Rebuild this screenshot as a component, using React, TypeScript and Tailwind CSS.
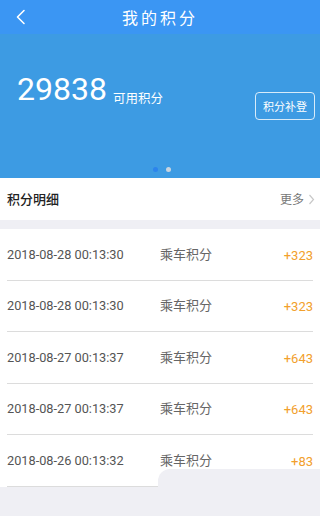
import * as React from "react";

const records = [
    {time: "2018-08-28 00:13:30", type: "乘车积分", amount: "+323"},
    {time: "2018-08-28 00:13:30", type: "乘车积分", amount: "+323"},
    {time: "2018-08-27 00:13:37", type: "乘车积分", amount: "+643"},
    {time: "2018-08-27 00:13:37", type: "乘车积分", amount: "+643"},
    {time: "2018-08-26 00:13:32", type: "乘车积分", amount: "+83"},
];

export default function App() {
    return (
        <div
            className="relative w-[320px] h-[516px] overflow-hidden bg-white font-['Roboto','Noto_Sans_CJK_SC',sans-serif]">
            {/* top bar */}
            <div className="h-[34px] bg-[#3b96f3] grid grid-cols-[1fr_auto_1fr] items-center">
                <div className="pl-[15px] flex items-center">
                    <svg width="11" height="16" viewBox="0 0 11 16" fill="none">
                        <polyline points="9,1.5 2.5,8 9,14.5" stroke="white" strokeWidth="1.6"
                                  strokeLinecap="round" strokeLinejoin="round"/>
                    </svg>
                </div>
                <h1 className="text-white text-[16px] font-normal tracking-[3px] font-['Noto_Sans_CJK_SC',sans-serif]">我的积分</h1>
                <div/>
            </div>

            {/* points card */}
            <div className="h-[144px] bg-[#3d9be3] flex flex-col">
                <div className="flex justify-between items-start pl-[17px] pr-[5px] pt-[39px]">
                    <div className="flex items-end">
                        <span className="text-white text-[32px] leading-none">29838</span>
                        <span
                            className="text-white text-[12.5px] leading-none ml-[6px] mb-[1px] font-['Noto_Sans_CJK_SC',sans-serif]">可用积分</span>
                    </div>
                    <button type="button"
                            className="mt-[19px] w-[60px] h-[28px] rounded-[4px] border border-white/80 text-white text-[11px] font-['Noto_Sans_CJK_SC',sans-serif] flex items-center justify-center">
                        积分补登
                    </button>
                </div>
                <div className="mt-auto pb-[6px] flex justify-center items-center gap-[8px] pl-[3px]">
                    <span className="w-[5px] h-[5px] rounded-full bg-[#2c84ec]"/>
                    <span className="w-[5px] h-[5px] rounded-full bg-[#c9d4df]"/>
                </div>
            </div>

            {/* section header */}
            <div className="h-[42px] pl-[7px] pr-[5px] flex items-center justify-between font-['Noto_Sans_CJK_SC',sans-serif]">
                <span className="text-[13px] text-[#222] font-medium">积分明细</span>
                <span className="flex items-center text-[12px] text-[#777]">
                    更多
                    <svg width="7" height="11" viewBox="0 0 7 11" fill="none" className="ml-[4px]">
                        <polyline points="1.5,1 5.5,5.5 1.5,10" stroke="#c8c8c8" strokeWidth="1.2"/>
                    </svg>
                </span>
            </div>
            <div className="h-[9px] bg-[#efeff4]"/>

            {/* list */}
            <div>
                {records.map((r, i) => (
                    <div key={i}
                         className="mx-[7px] h-[51.5px] border-b border-[#dcdcdc] grid grid-cols-[153px_1fr_auto] items-center leading-none">
                        <span className="text-[12.75px] text-[#555] translate-y-[1px]">{r.time}</span>
                        <span className="text-[13px] text-[#666] -translate-y-[1px] font-['Noto_Sans_CJK_SC',sans-serif]">{r.type}</span>
                        <span className="text-[13px] text-[#f2a02c] translate-y-[1px]">{r.amount}</span>
                    </div>
                ))}
            </div>

            {/* bottom gray layer */}
            <div className="absolute left-[158px] right-0 top-[469px] bottom-0 bg-[#efeff4] rounded-tl-[12px]"/>
            <div className="absolute left-0 right-0 top-[487px] bottom-0 bg-[#efeff4]"/>
        </div>
    )
}
